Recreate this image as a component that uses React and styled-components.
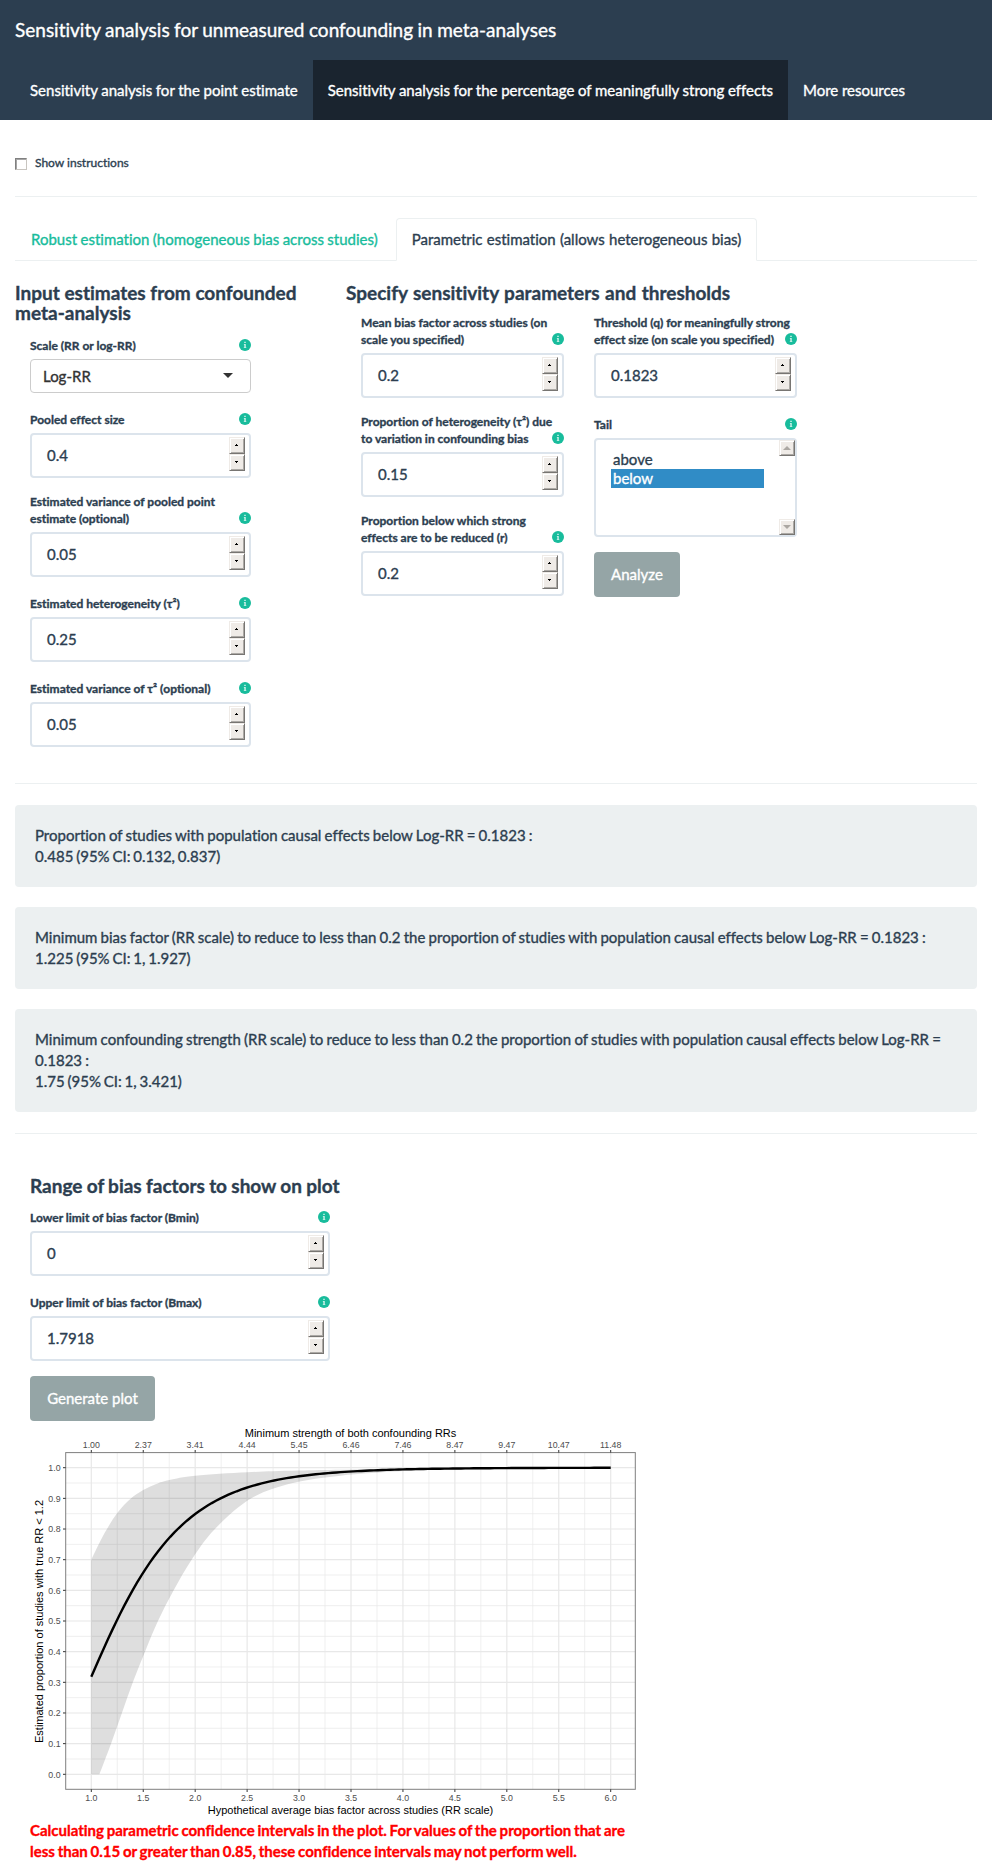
import React from "react";
import styled, { createGlobalStyle } from "styled-components";

const GlobalStyle = createGlobalStyle`
  *, *::before, *::after { box-sizing: border-box; }
  body {
    margin: 0;
    background: #fff;
    color: #2c3e50;
    font: 15px/21px Lato, "Liberation Sans", sans-serif;
    font-variant-ligatures: no-common-ligatures;
    -webkit-text-stroke: 0.35px;
  }
  h4, p { margin: 0; }
`;

const Navbar = styled.header`
  height: 120px;
  background: #2c3e50;
  color: #fff;
`;
const Brand = styled.div`
  height: 60px;
  padding: 0 15px;
  font-size: 19px;
  line-height: 60px;
  word-spacing: -0.4px;
`;
const NavList = styled.nav`
  display: flex;
  padding-left: 15px;
  word-spacing: -0.18px;
`;
const NavItem = styled.a`
  height: 60px;
  padding: 0 15px;
  line-height: 61px;
  background: ${(p) => (p.$active ? "#1a242f" : "transparent")};
`;
const Page = styled.main`
  padding: 0 15px;
`;
const CheckRow = styled.label`
  display: flex;
  align-items: center;
  gap: 8px;
  height: 17px;
  margin-top: 34px;
  font-size: 12px;
  line-height: 17px;
`;
const CheckBox = styled.span`
  width: 12px;
  height: 12px;
  margin-top: 3px;
  border: 1px solid;
  border-color: #808080 #c8c5c0 #c8c5c0 #808080;
  box-shadow: inset 1px 1px 0 #a5a5a5;
`;
const Rule = styled.hr`
  height: 1px;
  margin: ${(p) => p.$top}px 0 21px;
  border: 0;
  background: #ecf0f1;
`;
const Tabs = styled.div`
  display: flex;
  gap: 2px;
  height: 43px;
  border-bottom: 1px solid #ecf0f1;
`;
const Tab = styled.a`
  height: 43px;
  padding: 10px 15px;
  border: 1px solid ${(p) => (p.$active ? "#ecf0f1" : "transparent")};
  border-bottom-color: ${(p) => (p.$active ? "#fff" : "transparent")};
  border-radius: 4px 4px 0 0;
  color: ${(p) => (p.$active ? "#2c3e50" : "#18bc9c")};
  word-spacing: ${(p) => (p.$active ? 0.4 : -0.4)}px;
`;
const Columns = styled.div`
  display: flex;
  height: 501px;
  padding-top: 21px;
`;
const Estimates = styled.section`
  width: 331px;
  padding-right: 30px;
`;
const Parameters = styled.section`
  width: 631px;
`;
const Heading = styled.h4`
  padding-top: 1px;
  margin-bottom: ${(p) => p.$gap || 11}px;
  font-size: 19px;
  line-height: 20px;
  font-weight: 700;
  word-spacing: ${(p) => p.$spacing || 0}px;
`;
const FieldColumn = styled.div`
  width: ${(p) => p.$width}px;
  margin-left: ${(p) => p.$indent || 0}px;
`;
const ParameterGrid = styled.div`
  display: flex;
  gap: 30px;
  padding-left: 15px;
`;
const FieldBox = styled.div`
  margin-bottom: 15px;
`;
const LabelRow = styled.div`
  display: flex;
  justify-content: space-between;
  align-items: flex-end;
  min-height: 20px;
  margin-bottom: 5px;
  font-size: 12px;
  line-height: 17px;
  font-weight: 700;
  white-space: pre;
`;
const LabelText = styled.span`
  width: 0;
`;
const InfoSvg = styled.svg`
  flex: none;
  margin: 0 0 3px;
`;
const NumberBox = styled.div`
  display: flex;
  justify-content: space-between;
  height: 45px;
  padding: 2px 4px 0 15px;
  border: 2px solid #dce4ec;
  border-radius: 4px;
  line-height: 37px;
`;
const Spinner = styled.span`
  display: flex;
  flex-direction: column;
  width: 16px;
`;
const ClassicButton = styled.span`
  display: flex;
  align-items: center;
  justify-content: center;
  width: 16px;
  height: ${(p) => p.$height}px;
  border: 1px solid;
  border-color: #efebe7 #777572 #777572 #efebe7;
  background: #efebe7;
  box-shadow: inset 1px 1px 0 #fff, inset -1px -1px 0 #aca9a5;
`;
const StepArrow = styled.svg`
  margin: 0 1px 1px 0;
`;
const SelectBox = styled.div`
  display: flex;
  align-items: center;
  justify-content: space-between;
  height: 34px;
  padding: 1px 17px 0 12px;
  border: 1px solid #ccc;
  border-radius: 4px;
  color: #333;
`;
const Caret = styled.span`
  margin-top: -3px;
  border: 5px solid transparent;
  border-top-color: #333;
  border-bottom: 0;
`;
const ListBox = styled.div`
  display: flex;
  justify-content: space-between;
  height: 99px;
  border: 2px solid #dce4ec;
  border-radius: 4px;
`;
const Options = styled.div`
  width: 168px;
  padding: 10px 0 0 15px;
`;
const Option = styled.div`
  height: 19px;
  padding-left: 2px;
  line-height: 19px;
  color: ${(p) => (p.$selected ? "#fff" : "#2c3e50")};
  background: ${(p) => (p.$selected ? "#308cc6" : "transparent")};
`;
const ScrollBar = styled.div`
  display: flex;
  flex-direction: column;
  justify-content: space-between;
`;
const Button = styled.button`
  display: block;
  width: ${(p) => p.$width}px;
  height: 45px;
  padding: 0;
  border: 0;
  border-radius: 4px;
  background: #95a5a6;
  color: #fff;
  font: inherit;
`;
const Results = styled.section`
  display: flex;
  flex-direction: column;
  gap: 20px;
`;
const Well = styled.div`
  padding: 20px;
  border-radius: 4px;
  background: #ecf0f1;
  word-spacing: -0.65px;
`;
const Estimate = styled.div`
  word-spacing: -1px;
`;
const PlotSection = styled.section`
  padding: 20px 0 0 15px;
`;
const PlotSvg = styled.svg`
  display: block;
  font-family: "Liberation Sans", Arial, sans-serif;
  -webkit-text-stroke: 0;
`;
const Warning = styled.p`
  width: 610px;
  color: #f00;
  font-weight: 700;
  word-spacing: -0.9px;
`;

const InfoIcon = () => (
  <InfoSvg width="12" height="12" viewBox="0 0 12 12">
    <circle cx="6" cy="6" r="6" fill="#18bc9c" />
    <path d="M5.2 2.8h1.6v1.3H5.2zM4.9 5h1.9v3.2h.5v.9H4.8v-.9h.5V5.9h-.4z" fill="#c5efe6" />
  </InfoSvg>
);

const SpinArrow = ({ down }) => (
  <StepArrow width="3" height="2" viewBox="0 0 3 2" shapeRendering="crispEdges">
    <path d={down ? "M0 0H3V1H2V2H1V1H0Z" : "M0 2H3V1H2V0H1V1H0Z"} />
  </StepArrow>
);

const ScrollArrow = ({ down }) => (
  <svg width="8" height="4" viewBox="0 0 8 4">
    <path d={down ? "M0 0H8L4 4Z" : "M0 4H8L4 0Z"} fill="#aca8a3" />
  </svg>
);

const Label = ({ children }) => (
  <LabelRow>
    <LabelText>{children}</LabelText>
    <InfoIcon />
  </LabelRow>
);

const NumberField = ({ label, value }) => (
  <FieldBox>
    <Label>{label}</Label>
    <NumberBox>
      {value}
      <Spinner>
        <ClassicButton $height={17}><SpinArrow /></ClassicButton>
        <ClassicButton $height={17}><SpinArrow down /></ClassicButton>
      </Spinner>
    </NumberBox>
  </FieldBox>
);

const sx = (v) => 61.3 + (v - 1) * 103.88;
const sy = (p) => 353.3 - p * 306.6;

const normalCdf = (z) => {
  const t = 1 / (1 + 0.2316419 * Math.abs(z));
  const poly = t * (0.31938153 + t * (-0.356563782 + t * (1.781477937 + t * (-1.821255978 + t * 1.330274429))));
  const tail = (Math.exp((-z * z) / 2) / Math.sqrt(2 * Math.PI)) * poly;
  return z > 0 ? 1 - tail : tail;
};

const curve = Array.from({ length: 126 }, (_, i) => {
  const b = 1 + i * 0.04;
  return [b, normalCdf((0.1823 + Math.log(b) - 0.4) / 0.461)];
});

const upper = [[1, 0.7], [1.125, 0.785], [1.25, 0.852], [1.375, 0.898], [1.5, 0.927], [1.625, 0.947], [1.75, 0.96], [2, 0.974], [2.5, 0.985], [3, 0.991], [4, 0.996], [6, 1]];
const lower = [[6, 0.999], [4.5, 0.994], [4, 0.989], [3.4, 0.974], [2.94, 0.95], [2.54, 0.9], [2.19, 0.8], [1.966, 0.7], [1.793, 0.6], [1.642, 0.5], [1.517, 0.4], [1.4, 0.3], [1.295, 0.2], [1.19, 0.1], [1.078, 0]];

const smooth = (pts) =>
  pts.slice(0, -1).map((p1, i) => {
    const p0 = pts[i - 1] || p1;
    const p2 = pts[i + 1];
    const p3 = pts[i + 2] || p2;
    const c = [
      sx(p1[0] + (p2[0] - p0[0]) / 6), sy(p1[1] + (p2[1] - p0[1]) / 6),
      sx(p2[0] - (p3[0] - p1[0]) / 6), sy(p2[1] - (p3[1] - p1[1]) / 6),
      sx(p2[0]), sy(p2[1]),
    ];
    return "C" + c.map((n) => n.toFixed(2)).join(" ");
  }).join("");

const ribbonPath = `M${sx(1)} ${sy(0.7)}${smooth(upper)}L${sx(6)} ${sy(0.999)}${smooth(lower)}L${sx(1)} ${sy(0)}Z`;
const curvePath = "M" + curve.map(([b, p]) => `${sx(b).toFixed(2)} ${sy(p).toFixed(2)}`).join("L");

const topTicks = ["1.00", "2.37", "3.41", "4.44", "5.45", "6.46", "7.46", "8.47", "9.47", "10.47", "11.48"];
const yTicks = Array.from({ length: 11 }, (_, i) => i / 10);

const Plot = () => (
  <PlotSvg width="610" height="399" viewBox="0 0 610 399">
    <g stroke="#e8e8e8">
      {topTicks.map((t, i) => (
        <React.Fragment key={t}>
          <path strokeWidth="1.2" d={`M${sx(1 + i / 2)} 31.6V368.3`} />
          {i < 10 && <path strokeWidth="0.7" d={`M${sx(1.25 + i / 2)} 31.6V368.3`} />}
        </React.Fragment>
      ))}
      {yTicks.map((v) => (
        <React.Fragment key={v}>
          <path strokeWidth="1.2" d={`M35.7 ${sy(v)}H605.3`} />
          {v < 1 && <path strokeWidth="0.7" d={`M35.7 ${sy(v + 0.05)}H605.3`} />}
        </React.Fragment>
      ))}
    </g>
    <path d={ribbonPath} fill="#000" fillOpacity="0.13" />
    <path d={curvePath} fill="none" stroke="#000" strokeWidth="2.4" />
    <rect x="35.7" y="31.6" width="569.6" height="336.7" fill="none" stroke="#7f7f7f" strokeWidth="1" />
    <g stroke="#333" strokeWidth="1">
      {topTicks.map((t, i) => (
        <path key={t} d={`M${sx(1 + i / 2)} 29V31.6M${sx(1 + i / 2)} 368.3V371`} />
      ))}
      {yTicks.map((v) => <path key={v} d={`M33 ${sy(v)}H35.7`} />)}
    </g>
    <g fill="#4d4d4d" fontSize="8.8">
      {topTicks.map((t, i) => (
        <React.Fragment key={t}>
          <text x={sx(1 + i / 2)} y="27" textAnchor="middle">{t}</text>
          <text x={sx(1 + i / 2)} y="380" textAnchor="middle">{(1 + i / 2).toFixed(1)}</text>
        </React.Fragment>
      ))}
      {yTicks.map((v) => (
        <text key={v} x="30.6" y={sy(v) + 3.3} textAnchor="end">{v.toFixed(1)}</text>
      ))}
    </g>
    <g fill="#000" fontSize="11" textAnchor="middle">
      <text x="320.5" y="16">Minimum strength of both confounding RRs</text>
      <text x="320.5" y="393">Hypothetical average bias factor across studies (RR scale)</text>
      <text transform="translate(13.2 200.5) rotate(-90)">{"Estimated proportion of studies with true RR < 1.2"}</text>
    </g>
  </PlotSvg>
);

export default function App() {
  return (
    <>
      <GlobalStyle />
      <Navbar>
        <Brand>Sensitivity analysis for unmeasured confounding in meta-analyses</Brand>
        <NavList>
          <NavItem>Sensitivity analysis for the point estimate</NavItem>
          <NavItem $active>Sensitivity analysis for the percentage of meaningfully strong effects</NavItem>
          <NavItem>More resources</NavItem>
        </NavList>
      </Navbar>
      <Page>
        <CheckRow><CheckBox />Show instructions</CheckRow>
        <Rule $top={25} />
        <Tabs>
          <Tab>Robust estimation (homogeneous bias across studies)</Tab>
          <Tab $active>Parametric estimation (allows heterogeneous bias)</Tab>
        </Tabs>
        <Columns>
          <Estimates>
            <Heading>Input estimates from confounded meta-analysis</Heading>
            <FieldColumn $width={221} $indent={15}>
              <FieldBox>
                <Label>Scale (RR or log-RR)</Label>
                <SelectBox>Log-RR<Caret /></SelectBox>
              </FieldBox>
              <NumberField label="Pooled effect size" value="0.4" />
              <NumberField label={"Estimated variance of pooled point\nestimate (optional)"} value="0.05" />
              <NumberField label="Estimated heterogeneity (τ²)" value="0.25" />
              <NumberField label="Estimated variance of τ² (optional)" value="0.05" />
            </FieldColumn>
          </Estimates>
          <Parameters>
            <Heading $spacing={0.8}>Specify sensitivity parameters and thresholds</Heading>
            <ParameterGrid>
              <FieldColumn $width={203}>
                <NumberField label={"Mean bias factor across studies (on\nscale you specified)"} value="0.2" />
                <NumberField label={"Proportion of heterogeneity (τ²) due\nto variation in confounding bias"} value="0.15" />
                <NumberField label={"Proportion below which strong\neffects are to be reduced (r)"} value="0.2" />
              </FieldColumn>
              <FieldColumn $width={203}>
                <NumberField label={"Threshold (q) for meaningfully strong\neffect size (on scale you specified)"} value="0.1823" />
                <FieldBox>
                  <Label>Tail</Label>
                  <ListBox>
                    <Options>
                      <Option>above</Option>
                      <Option $selected>below</Option>
                    </Options>
                    <ScrollBar>
                      <ClassicButton $height={16}><ScrollArrow /></ClassicButton>
                      <ClassicButton $height={16}><ScrollArrow down /></ClassicButton>
                    </ScrollBar>
                  </ListBox>
                </FieldBox>
                <Button $width={86}>Analyze</Button>
              </FieldColumn>
            </ParameterGrid>
          </Parameters>
        </Columns>
        <Rule $top={21} />
        <Results>
          <Well>
            Proportion of studies with population causal effects below Log-RR = 0.1823 :
            <Estimate>0.485 (95% CI: 0.132, 0.837)</Estimate>
          </Well>
          <Well>
            Minimum bias factor (RR scale) to reduce to less than 0.2 the proportion of studies with population causal effects below Log-RR = 0.1823 :
            <Estimate>1.225 (95% CI: 1, 1.927)</Estimate>
          </Well>
          <Well>
            Minimum confounding strength (RR scale) to reduce to less than 0.2 the proportion of studies with population causal effects below Log-RR = 0.1823 :
            <Estimate>1.75 (95% CI: 1, 3.421)</Estimate>
          </Well>
        </Results>
        <Rule $top={21} />
        <PlotSection>
          <Heading $gap={10} $spacing={-0.35}>Range of bias factors to show on plot</Heading>
          <FieldColumn $width={300}>
            <NumberField label="Lower limit of bias factor (Bmin)" value="0" />
            <NumberField label="Upper limit of bias factor (Bmax)" value="1.7918" />
          </FieldColumn>
          <Button $width={125}>Generate plot</Button>
          <Plot />
          <Warning>
            Calculating parametric confidence intervals in the plot. For values of the proportion that are less than 0.15 or greater than 0.85, these confidence intervals may not perform well.
          </Warning>
        </PlotSection>
      </Page>
    </>
  );
}
